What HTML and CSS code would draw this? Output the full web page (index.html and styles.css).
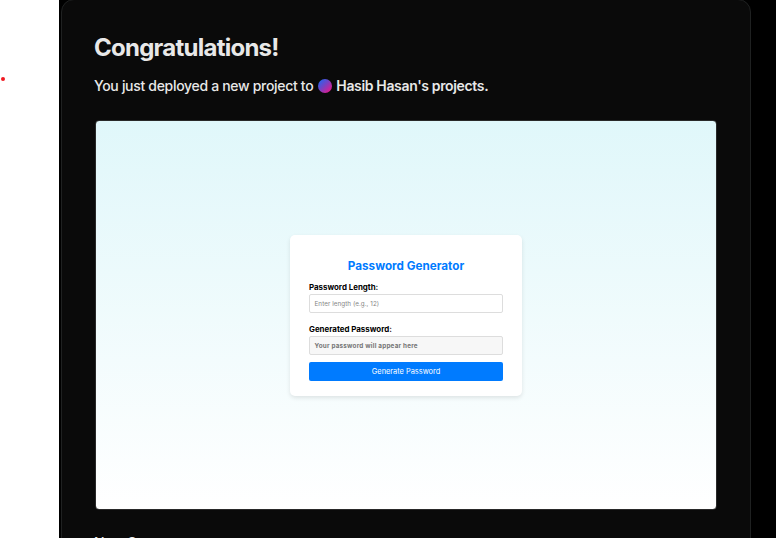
FILE: index.html
```html
<!DOCTYPE html>
<html lang="en">
<head>
<meta charset="utf-8">
<title>Congratulations!</title>
<link rel="stylesheet" href="styles.css">
</head>
<body>
<aside class="rail"><span class="dot"></span></aside>
<main class="stage">
  <section class="panel">
    <h1 class="title">Congratulations!</h1>
    <p class="summary"><span class="lead">You just deployed a new project to</span><span class="avatar"></span><strong class="team">Hasib Hasan's projects.</strong></p>
    <div class="preview">
      <div class="card">
        <h2 class="card-title">Password Generator</h2>
        <div class="label">Password Length:</div>
        <div class="field">Enter length (e.g., 12)</div>
        <div class="label second">Generated Password:</div>
        <div class="field output">Your password will appear here</div>
        <div class="button">Generate Password</div>
      </div>
    </div>
    <h3 class="next">Next Steps</h3>
  </section>
</main>
</body>
</html>
```
FILE: styles.css
```css
* { box-sizing: border-box; }
body {
  margin: 0;
  width: 776px;
  height: 538px;
  overflow: hidden;
  display: flex;
  background: #000;
  font-family: Inter, "Liberation Sans", sans-serif;
  white-space: nowrap;
}
h1, h2, h3, p { margin: 0; }
.rail { width: 59px; height: 538px; background: #fff; padding: 77px 0 0 1px; }
.dot { display: block; width: 4px; height: 4px; border-radius: 50%; background: #f01820; }
.stage { width: 717px; height: 538px; padding-left: 2px; overflow: hidden; }
.panel {
  width: 690px;
  height: 600px;
  margin-top: -1px;
  padding: 32px 32px 0;
  border: 1px solid #1f2121;
  border-radius: 13px;
  background: #0a0a0a;
  color: #e8e8e8;
}
.title { height: 32px; line-height: 32px; font-size: 24px; font-weight: 650; letter-spacing: -0.75px; }
.summary { display: flex; align-items: center; height: 20px; margin-top: 12px; font-size: 14px; line-height: 20px; }
.lead { font-weight: 450; letter-spacing: -0.31px; }
.avatar { width: 14px; height: 14px; margin: 0 4px 0 5px; border-radius: 50%; background: linear-gradient(135deg, #2864ee 10%, #7443c5 45%, #e6178b 90%); }
.team { font-weight: 600; letter-spacing: -0.35px; }
.preview {
  width: 622px;
  height: 390px;
  margin: 24px 0 0 1px;
  border: 1px solid #292929;
  border-radius: 4px;
  background: linear-gradient(#e0f7fa, #fff);
  display: flex;
  justify-content: center;
  padding-top: 113.5px;
}
.card {
  width: 232px;
  height: 161px;
  padding: 23.5px 19px 0;
  border-radius: 5px;
  background: #fff;
  box-shadow: 0 2px 4px rgba(0, 0, 0, .1);
  color: #000;
}
.card-title { height: 16px; line-height: 16px; font-size: 11.7px; font-weight: 750; color: #007bff; text-align: center; }
.label { height: 10px; margin-top: 8px; line-height: 10px; font-size: 7.9px; font-weight: 750; }
.field { height: 19px; margin-top: 2px; padding-left: 4.5px; border: 1px solid #ddd; border-radius: 2px; line-height: 18px; font-size: 6.3px; color: #858585; letter-spacing: 0.06px; }
.label.second { margin-top: 11px; }
.output { background: #f7f7f7; font-weight: 750; color: #757575; letter-spacing: 0.23px; }
.button { height: 19px; margin-top: 7px; border-radius: 2px; background: #007bff; color: #fff; text-align: center; font-size: 7.4px; line-height: 20px; }
.next { margin-top: 23px; font-size: 14px; line-height: 20px; font-weight: 500; letter-spacing: -0.3px; }
```
